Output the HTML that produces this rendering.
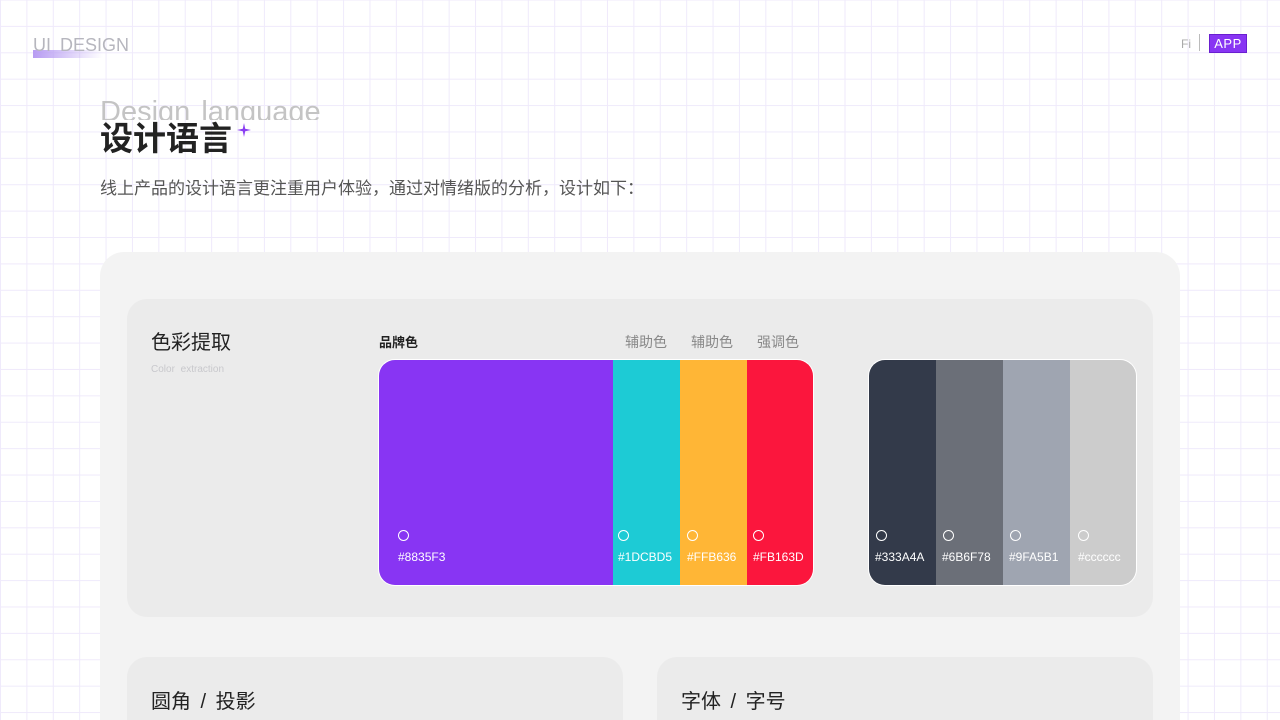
<!DOCTYPE html>
<html style="width:1280px;height:720px;overflow:hidden"><head><meta charset="utf-8"><style>
*{margin:0;padding:0;box-sizing:border-box}
body{width:1280px;height:720px;overflow:hidden;position:relative;font-family:"Liberation Sans","Noto Sans CJK SC",sans-serif;
background-color:#fff;
background-image:linear-gradient(#efeafb 1px,transparent 1px),linear-gradient(90deg,#efeafb 1px,transparent 1px);
background-size:26.4px 26.4px;background-position:0 -0.5px}
.a{position:absolute}
.sw{position:absolute;top:0;height:100%}
.c{position:absolute;left:19px;top:170px;width:11px;height:11px;border:1.5px solid #fff;border-radius:50%}
.h{position:absolute;left:19px;top:190px;color:#fff;font-size:12px;white-space:nowrap}
</style></head><body>
<div class="a" style="left:33px;top:50px;width:70px;height:8px;background:linear-gradient(90deg,#b79cf2,rgba(220,205,250,0))"></div>
<div class="a" style="left:33px;top:35px;font-size:18px;color:#b6b6be;word-spacing:4px">UI DESIGN</div>
<div class="a" style="left:1181px;top:37px;font-size:12px;color:#aaa">Fi</div>
<div class="a" style="left:1199px;top:34px;width:1px;height:17px;background:#bbb"></div>
<div class="a" style="left:1209px;top:34px;width:38px;height:19px;background:#8835f3;border:1px solid #6a1fd0;color:#fff;font-size:13px;text-align:center;line-height:17px;letter-spacing:0.5px">APP</div>
<div class="a" style="left:100px;top:92px;font-size:29px;color:#c4c4c4;height:28px;overflow:hidden;line-height:40px;word-spacing:3px">Design language</div>
<div class="a" style="left:100px;top:117px;font-size:33px;font-weight:bold;color:#222;line-height:44px">设计语言</div>
<svg class="a" style="left:237px;top:123px" width="14" height="14" viewBox="0 0 14 14"><path d="M7 0 L8.2 5.8 L14 7 L8.2 8.2 L7 14 L5.8 8.2 L0 7 L5.8 5.8Z" fill="#8a3ef2"/></svg>
<div class="a" style="left:100px;top:174px;font-size:17px;color:#555">线上产品的设计语言更注重用户体验，通过对情绪版的分析，设计如下：</div>
<div class="a" style="left:100px;top:252px;width:1080px;height:468px;background:#f3f3f3;border-radius:24px 24px 0 0"></div>
<div class="a" style="left:127px;top:299px;width:1026px;height:318px;background:#ebebeb;border-radius:20px"></div>
<div class="a" style="left:151px;top:326px;font-size:20px;color:#222">色彩提取</div>
<div class="a" style="left:151px;top:364px;font-size:10px;color:#c8c8cc;word-spacing:3px">Color extraction</div>
<div class="a" style="left:379px;top:332px;font-size:13px;color:#222;font-weight:bold">品牌色</div>
<div class="a" style="left:625px;top:332px;font-size:14px;color:#888">辅助色</div>
<div class="a" style="left:691px;top:332px;font-size:14px;color:#888">辅助色</div>
<div class="a" style="left:757px;top:332px;font-size:14px;color:#888">强调色</div>
<div class="a" style="left:378px;top:359px;width:436px;height:227px;border:1px solid #fff;border-radius:17px;overflow:hidden">
<div class="sw" style="left:0;width:234px;background:#8835f3"><div class="c"></div><div class="h">#8835F3</div></div>
<div class="sw" style="left:234px;width:67px;background:#1dcbd5"><div class="c" style="left:5px"></div><div class="h" style="left:5px">#1DCBD5</div></div>
<div class="sw" style="left:301px;width:67px;background:#ffb636"><div class="c" style="left:7px"></div><div class="h" style="left:7px">#FFB636</div></div>
<div class="sw" style="left:368px;width:68px;background:#fb163d"><div class="c" style="left:6px"></div><div class="h" style="left:6px">#FB163D</div></div>
</div>
<div class="a" style="left:868px;top:359px;width:269px;height:227px;border:1px solid #fff;border-radius:17px;overflow:hidden">
<div class="sw" style="left:0;width:67px;background:#333a4a"><div class="c" style="left:7px"></div><div class="h" style="left:6px">#333A4A</div></div>
<div class="sw" style="left:67px;width:67px;background:#6b6f78"><div class="c" style="left:7px"></div><div class="h" style="left:6px">#6B6F78</div></div>
<div class="sw" style="left:134px;width:67px;background:#9fa5b1"><div class="c" style="left:7px"></div><div class="h" style="left:6px">#9FA5B1</div></div>
<div class="sw" style="left:201px;width:68px;background:#cccccc"><div class="c" style="left:8px"></div><div class="h" style="left:8px">#cccccc</div></div>
</div>
<div class="a" style="left:127px;top:657px;width:496px;height:63px;background:#ebebeb;border-radius:20px 20px 0 0"></div>
<div class="a" style="left:657px;top:657px;width:496px;height:63px;background:#ebebeb;border-radius:20px 20px 0 0"></div>
<div class="a" style="left:151px;top:685px;font-size:20px;color:#222;word-spacing:4px">圆角 / 投影</div>
<div class="a" style="left:681px;top:685px;font-size:20px;color:#222;word-spacing:4px">字体 / 字号</div>
</body></html>
